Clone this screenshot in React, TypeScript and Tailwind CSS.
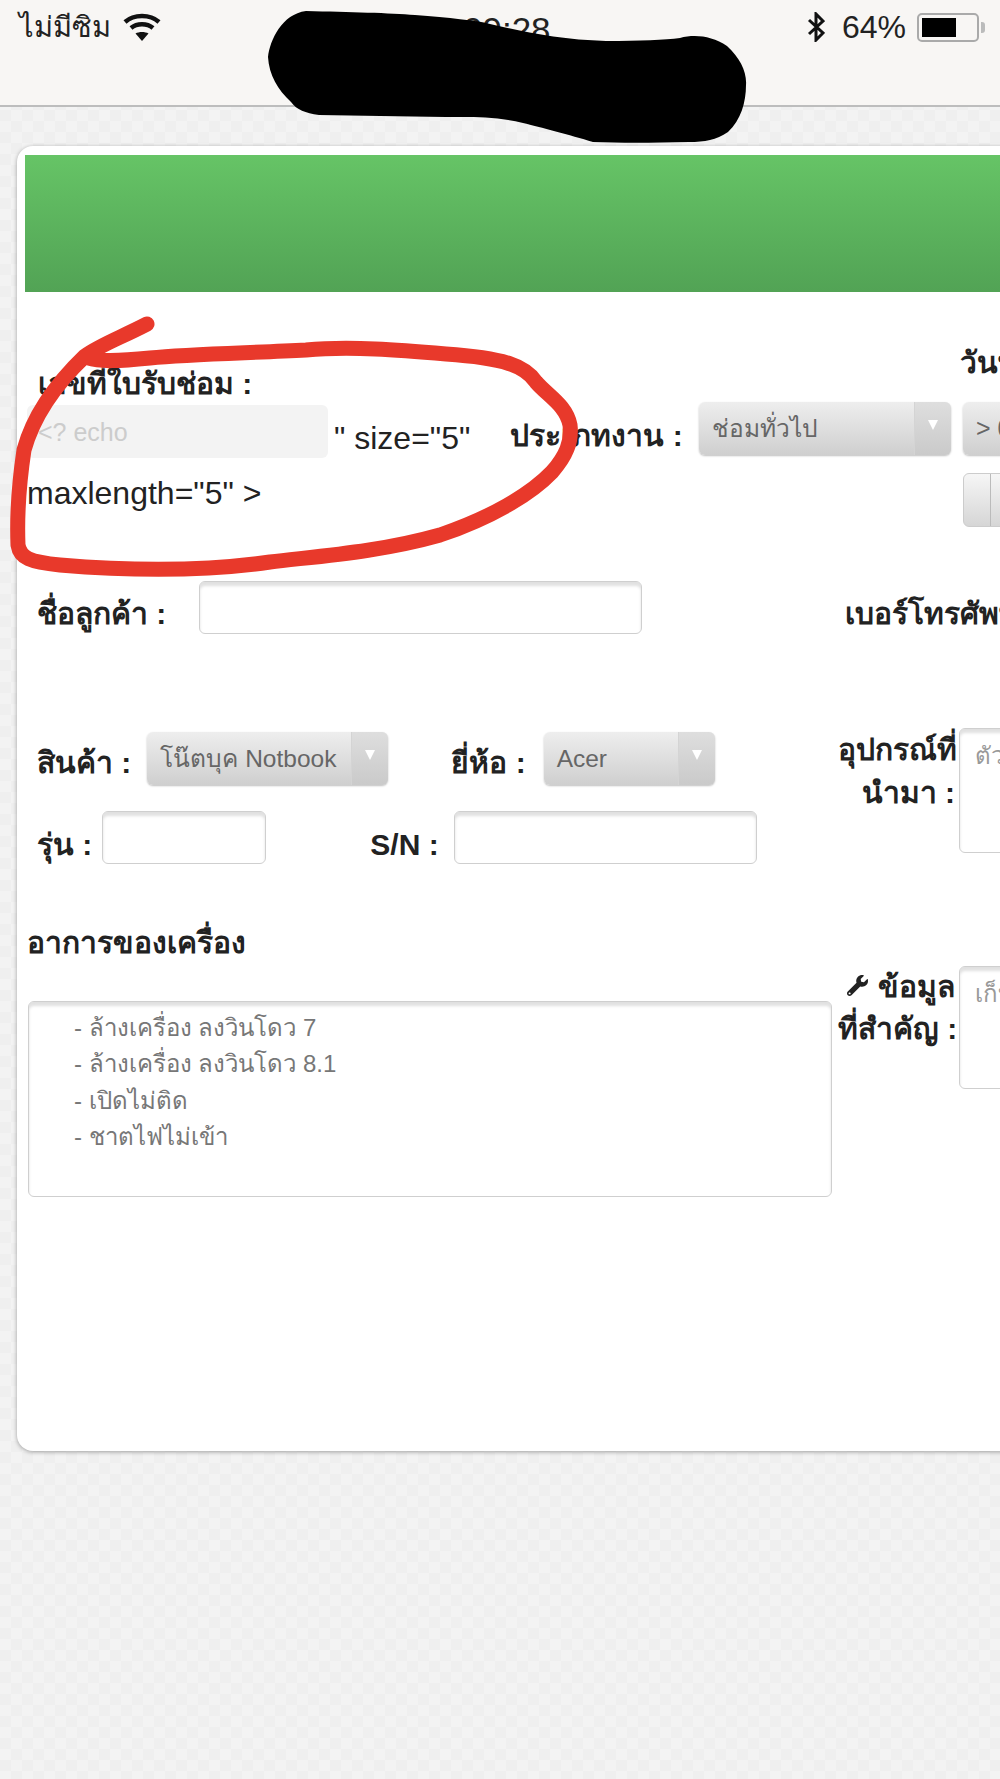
import React from 'react';
import { FaWrench } from 'react-icons/fa';

function Label({ className = '', children }: { className?: string; children: React.ReactNode }) {
  return <span className={`font-bold text-[30px] leading-[34px] text-[#222] whitespace-nowrap ${className}`}>{children}</span>;
}

function Select({ text, width, arrow = 37, className = '' }: { text: string; width: string; arrow?: number; className?: string }) {
  return (
    <div className={`flex h-[53px] shrink-0 rounded-[6px] overflow-hidden bg-gradient-to-b from-[#eeeeee] to-[#cfcfcf] shadow-[0_1px_2px_rgba(0,0,0,0.25)] ${width} ${className}`}>
      <span className="flex-1 pl-[13px] pt-[11px] text-[24.5px] leading-[32px] text-[#666] whitespace-nowrap overflow-hidden">{text}</span>
      <span style={{ width: arrow }} className="flex shrink-0 items-start pt-[18px] justify-center bg-gradient-to-b from-[#dedede] to-[#cacaca] border-l border-[#d4d4d4]">
        <span className="block w-0 h-0 border-x-[5px] border-x-transparent border-t-[10px] border-t-white" />
      </span>
    </div>
  );
}

function Input({ width, className = '' }: { width: string; className?: string }) {
  return <div className={`h-[53px] shrink-0 rounded-[6px] bg-white border border-[#cfcfcf] shadow-[inset_0_4px_3px_rgba(0,0,0,0.12)] ${width} ${className}`} />;
}

function TextBox({ children, className = '' }: { children?: React.ReactNode; className?: string }) {
  return <div className={`shrink-0 rounded-[6px] bg-white border border-[#cfcfcf] shadow-[inset_0_4px_3px_rgba(0,0,0,0.12)] text-[24px] ${className}`}>{children}</div>;
}

export default function App() {
  return (
    <div className="relative w-[1000px] h-[1779px] overflow-hidden bg-[repeating-conic-gradient(#f3f3f3_0%_25%,#efefef_0%_50%)] bg-[length:22px_22px] font-['Liberation_Sans','Noto_Sans','DejaVu_Sans',sans-serif]">
      {/* status bar */}
      <div className="flex h-[107px] items-start justify-between bg-[#f8f6f4] border-b-2 border-[#bdbdbd] pl-[19px] pr-[15px] pt-[12px]">
        <div className="flex items-center gap-[14px]">
          <span className="text-[29px] leading-[30px] text-[#222]">ไม่มีซิม</span>
          <svg className="-ml-[2px]" width="38" height="28" viewBox="0 0 38 28" fill="none" stroke="#111" strokeWidth="4.5">
            <path d="M2 9C11 1 27 1 36 9" />
            <path d="M8 15C14 10 24 10 30 15" />
            <path d="M19 28L12.5 20.5C16 18.5 22 18.5 25.5 20.5Z" fill="#111" stroke="none" />
          </svg>
        </div>
        <span className="absolute left-[463px] top-[12px] text-[35px] leading-[35px] text-[#222]">09:28</span>
        <div className="flex items-center">
          <svg className="mr-[17px]" width="18" height="30" viewBox="0 0 18 30" fill="none" stroke="#111" strokeWidth="3">
            <path d="M2 8L16 21L9 28V2L16 9L2 22" />
          </svg>
          <span className="mr-[11px] text-[32px] leading-[30px] text-[#222]">64%</span>
          <div className="flex items-center">
            <div className="w-[62px] h-[29px] rounded-[5px] border-2 border-[#aaa] p-[3px]">
              <div className="w-[34px] h-full bg-black" />
            </div>
            <div className="ml-[2px] w-[4px] h-[11px] rounded-r-[3px] bg-[#bbb]" />
          </div>
        </div>
      </div>

      {/* page card, runs past the right edge */}
      <div className="mt-[39px] ml-[17px] w-[1100px] h-[1305px] rounded-[16px] bg-white px-[8px] pt-[9px] shadow-[0_1px_4px_rgba(0,0,0,0.35)]">
        <div className="h-[137px] bg-gradient-to-b from-[#66c466] to-[#52a355]" />

        <div className="flex items-start">
          <div className="w-[938px] shrink-0 pl-[2px]">
            <Label className="block ml-[11px] mt-[75px]">เลขที่ใบรับช่อม :</Label>
            <div className="flex items-start mt-[4px]">
              <div className="w-[301px] h-[53px] shrink-0 rounded-[6px] bg-[#f3f3f3] pl-[11px] pt-[12px] text-[25px] leading-[30px] text-[#cccccc]">&lt;? echo</div>
              <span className="ml-[6px] mt-[17px] text-[32px] leading-[32px] text-[#222] whitespace-nowrap">" size="5"</span>
              <Label className="ml-[40px] mt-[14px]">ประเภทงาน :</Label>
              <Select text="ช่อมทั่วไป" width="w-[252px]" className="ml-[16px] -mt-[3px]" />
            </div>
            <div className="mt-[19px] text-[32px] leading-[32px] text-[#222]">maxlength="5" &gt;</div>
          </div>
          <div className="flex-1">
            <Label className="block mt-[54px] -ml-[3px]">วันที่รับ</Label>
            <div className="mt-[22px] h-[53px] rounded-[6px] bg-gradient-to-b from-[#eeeeee] to-[#cfcfcf] pl-[13px] pt-[10px] text-[25px] leading-[32px] text-[#666] shadow-[0_1px_2px_rgba(0,0,0,0.25)]">&gt; 01</div>
            <div className="mt-[18px] flex h-[54px] rounded-[6px] overflow-hidden border border-[#ccc] bg-gradient-to-b from-[#f6f6f6] to-[#d6d6d6]">
              <span className="w-[27px] border-r border-[#bbb]" />
            </div>
          </div>
        </div>

        <div className="flex items-start mt-[54px] pl-[12px]">
          <Label className="mt-[16px]">ชื่อลูกค้า :</Label>
          <Input width="w-[443px]" className="ml-[33px]" />
          <Label className="ml-[203px] mt-[16px]">เบอร์โทรศัพท์ :</Label>
        </div>

        <div className="flex items-start mt-[94px] pl-[12px]">
          <div className="w-[801px] shrink-0">
            <div className="flex items-start pt-[4px]">
              <Label className="mt-[14px]">สินค้า :</Label>
              <Select text="โน๊ตบุค Notbook" width="w-[241px]" className="ml-[16px]" />
              <Label className="ml-[63px] mt-[14px]">ยี่ห้อ :</Label>
              <Select text="Acer" width="w-[171px]" className="ml-[18px]" />
            </div>
            <div className="flex items-start mt-[26px]">
              <Label className="mt-[17px]">รุ่น :</Label>
              <Input width="w-[164px]" className="ml-[10px]" />
              <Label className="ml-[104px] mt-[17px]">S/N :</Label>
              <Input width="w-[303px]" className="ml-[15px]" />
            </div>
          </div>
          <div className="w-[117px] shrink-0 text-right">
            <Label className="block leading-[43px]">อุปกรณ์ที่</Label>
            <Label className="block leading-[43px]">นำมา :</Label>
          </div>
          <TextBox className="ml-[4px] w-[300px] h-[125px] pl-[15px] pt-[9px] leading-[36px] text-[#999]">ตัวอย่าง</TextBox>
        </div>

        <div className="mt-[62px] pl-[2px]">
          <Label className="block">อาการของเครื่อง</Label>
        </div>

        <div className="flex items-start pl-[3px]">
          <TextBox className="mt-[41px] w-[804px] h-[196px] pl-[45px] pt-[8px] text-[#777] leading-[36.4px]">
            <div>- ล้างเครื่อง ลงวินโดว 7</div>
            <div>- ล้างเครื่อง ลงวินโดว 8.1</div>
            <div>- เปิดไม่ติด</div>
            <div>- ชาตไฟไม่เข้า</div>
          </TextBox>
          <div className="ml-[6px] w-[117px] shrink-0 mt-[6px] text-right">
            <Label className="block leading-[42px]">
              <FaWrench className="inline-block w-[21px] h-[21px] mr-[10px] -mt-[8px]" />ข้อมูล
            </Label>
            <Label className="block leading-[42px]">ที่สำคัญ :</Label>
          </div>
          <TextBox className="ml-[4px] mt-[6px] w-[300px] h-[123px] pl-[15px] pt-[9px] leading-[36px] text-[#999]">เก็บ</TextBox>
        </div>
      </div>

      {/* censor scribble */}
      <svg className="absolute left-0 top-0 pointer-events-none" width="1000" height="160" viewBox="0 0 1000 160">
        <path fill="#000" d="M306 11C350 12 390 13 415 15C450 18 475 20 490 24C520 31 560 40 606 41C640 41 665 40 680 38C695 34 712 36 727 46C740 58 747 72 746 85C746 102 741 120 728 132C716 140 705 142 689 142C650 143 620 143 593 142C570 135 540 127 523 123C495 116 470 117 446 117C400 116 360 116 319 115C305 113 297 110 291 102C278 90 269 75 268 57C270 40 282 14 306 11Z" />
      </svg>

      {/* red marker ring */}
      <svg className="absolute left-0 top-0 pointer-events-none" width="1000" height="620" viewBox="0 0 1000 620" fill="none">
        <path stroke="#e8392b" strokeWidth="15" strokeLinecap="round" strokeLinejoin="round" d="M147 324C120 338 100 345 85 356C60 380 35 410 24 450C18 490 17 520 18 545C20 558 30 562 60 565C120 570 200 572 270 562C320 556 380 552 440 535C490 518 530 495 552 472C566 456 572 442 570 425C566 405 548 396 536 382C525 366 505 358 446 354C400 350 350 346 306 350C250 353 190 354 150 358C120 361 100 362 88 358" />
      </svg>
    </div>
  );
}
